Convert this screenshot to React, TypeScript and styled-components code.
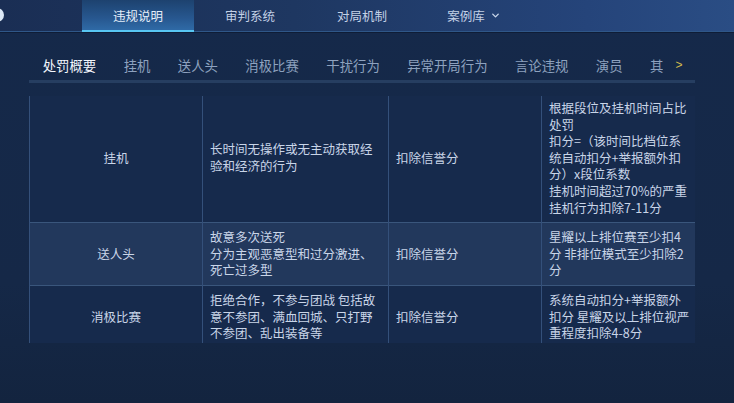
import { createGlobalStyle, styled } from "styled-components";
import { ChevronDown } from "lucide-react";

const GlobalStyle = createGlobalStyle`
  html, body {
    margin: 0;
    padding: 0;
    height: 100%;
  }
  body {
    background: linear-gradient(180deg, #15294a 0%, #152847 70%, #13243f 100%);
    font-family: "Noto Sans CJK SC", "Noto Sans", sans-serif;
    overflow: hidden;
  }
`;

const topTabs = [
  { label: "违规说明", active: true },
  { label: "审判系统" },
  { label: "对局机制" },
  { label: "案例库", menu: true },
];

const subTabs = [
  "处罚概要",
  "挂机",
  "送人头",
  "消极比赛",
  "干扰行为",
  "异常开局行为",
  "言论违规",
  "演员",
  "其他",
];

type Row = {
  name: string;
  desc: string[];
  penalty: string;
  rule: string[];
  shaded?: boolean;
};

const rows: Row[] = [
  {
    name: "挂机",
    desc: ["长时间无操作或无主动获取经", "验和经济的行为"],
    penalty: "扣除信誉分",
    rule: [
      "根据段位及挂机时间占比",
      "处罚",
      "扣分=（该时间比档位系",
      "统自动扣分+举报额外扣",
      "分）x段位系数",
      "挂机时间超过70%的严重",
      "挂机行为扣除7-11分",
    ],
  },
  {
    name: "送人头",
    desc: ["故意多次送死", "分为主观恶意型和过分激进、", "死亡过多型"],
    penalty: "扣除信誉分",
    rule: ["星耀以上排位赛至少扣4", "分 非排位模式至少扣除2", "分"],
    shaded: true,
  },
  {
    name: "消极比赛",
    desc: ["拒绝合作，不参与团战 包括故", "意不参团、满血回城、只打野", "不参团、乱出装备等"],
    penalty: "扣除信誉分",
    rule: ["系统自动扣分+举报额外", "扣分 星耀及以上排位视严", "重程度扣除4-8分"],
  },
];

export default function App() {
  return (
    <>
      <GlobalStyle />
      <Page>
        <TopBar>
          <BackDot />
          <TopTabs>
            {topTabs.map((t) => (
              <TopTab key={t.label} $active={!!t.active}>
                {t.label}
                {t.menu && <ChevronDown size={11} strokeWidth={3} />}
              </TopTab>
            ))}
          </TopTabs>
        </TopBar>

        <Content>
          <SubNav>
            <SubTabs>
              {subTabs.map((t, i) => (
                <SubTab key={t} $active={i === 0}>
                  {t}
                </SubTab>
              ))}
            </SubTabs>
            <More>&gt;</More>
          </SubNav>

          <Viewport>
            <Table>
              <colgroup>
                <col style={{ width: 173 }} />
                <col style={{ width: 186 }} />
                <col style={{ width: 153 }} />
                <col style={{ width: 154 }} />
              </colgroup>
              <tbody>
                {rows.map((r) => (
                  <Tr key={r.name} $shaded={!!r.shaded}>
                    <NameCell>{r.name}</NameCell>
                    <Cell>
                      {r.desc.map((l) => (
                        <Line key={l}>{l}</Line>
                      ))}
                    </Cell>
                    <Cell>{r.penalty}</Cell>
                    <Cell>
                      {r.rule.map((l) => (
                        <Line key={l}>{l}</Line>
                      ))}
                    </Cell>
                  </Tr>
                ))}
              </tbody>
            </Table>
          </Viewport>
        </Content>
      </Page>
    </>
  );
}

const Page = styled.div`
  width: 734px;
  height: 403px;
  display: flex;
  flex-direction: column;
`;

const TopBar = styled.div`
  height: 31px;
  display: flex;
  align-items: stretch;
  background: linear-gradient(90deg, #1a2e54 0%, #1e3761 40%, #25447a 80%, #2a4d84 100%);
  border-bottom: 1px solid #2f5788;
  box-shadow: 0 1px 0 #0f1d36;
`;

const BackDot = styled.div`
  width: 14px;
  height: 14px;
  margin: 8px 0 0 -10px;
  border-radius: 50%;
  background: #dce8f6;
`;

const TopTabs = styled.div`
  display: flex;
  margin-left: 78px;
`;

const TopTab = styled.div<{ $active: boolean }>`
  width: 112px;
  display: flex;
  align-items: center;
  justify-content: center;
  gap: 5px;
  font-size: 12.5px;
  color: ${(p) => (p.$active ? "#e4eefa" : "#c3d1e6")};
  background: ${(p) =>
    p.$active ? "linear-gradient(180deg, #1d426f 0%, #27578f 60%, #2f6aa6 100%)" : "transparent"};
  border-bottom: 2px solid ${(p) => (p.$active ? "#58c6f2" : "transparent")};
  margin-bottom: -1px;

  svg {
    color: #c8d6ea;
    margin-top: 1px;
  }
`;

const Content = styled.div`
  flex: 1;
  padding: 22px 39px 0 29px;
  display: flex;
  flex-direction: column;
`;

const SubNav = styled.div`
  display: flex;
  border-bottom: 3px solid #263e61;
`;

const SubTabs = styled.div`
  display: flex;
  width: 634px;
  overflow: hidden;
`;

const SubTab = styled.div<{ $active: boolean }>`
  flex: none;
  padding: 0 13.7px 4px;
  line-height: 22px;
  font-size: 13.4px;
  color: ${(p) => (p.$active ? "#f2f6fc" : "#8ea2bf")};
  border-bottom: 3px solid ${(p) => (p.$active ? "#4fc6ee" : "transparent")};
  margin-bottom: -3px;
`;

const More = styled.div`
  flex: 1;
  text-align: center;
  line-height: 22px;
  font-size: 12px;
  font-family: "Liberation Sans", sans-serif;
  color: #d6bc4c;
`;

const Viewport = styled.div`
  margin-top: 13px;
  height: 247px;
  overflow: hidden;
`;

const Table = styled.table`
  width: 666px;
  margin-top: -2px;
  table-layout: fixed;
  border-collapse: collapse;
  font-size: 12.5px;
  line-height: 16.6px;
  color: #c9d5e8;
`;

const Tr = styled.tr<{ $shaded: boolean }>`
  background: ${(p) => (p.$shaded ? "#22385c" : "#162a4c")};

  & + & {
    border-top: 1px solid #3a567c;
  }
`;

const Cell = styled.td`
  padding: 6px 7px;
  vertical-align: middle;
  text-align: left;
  border-left: 1px solid #34507a;
  border-right: 1px solid #34507a;
`;

const NameCell = styled(Cell)`
  text-align: center;
`;

const Line = styled.span`
  display: block;
  white-space: nowrap;
`;
